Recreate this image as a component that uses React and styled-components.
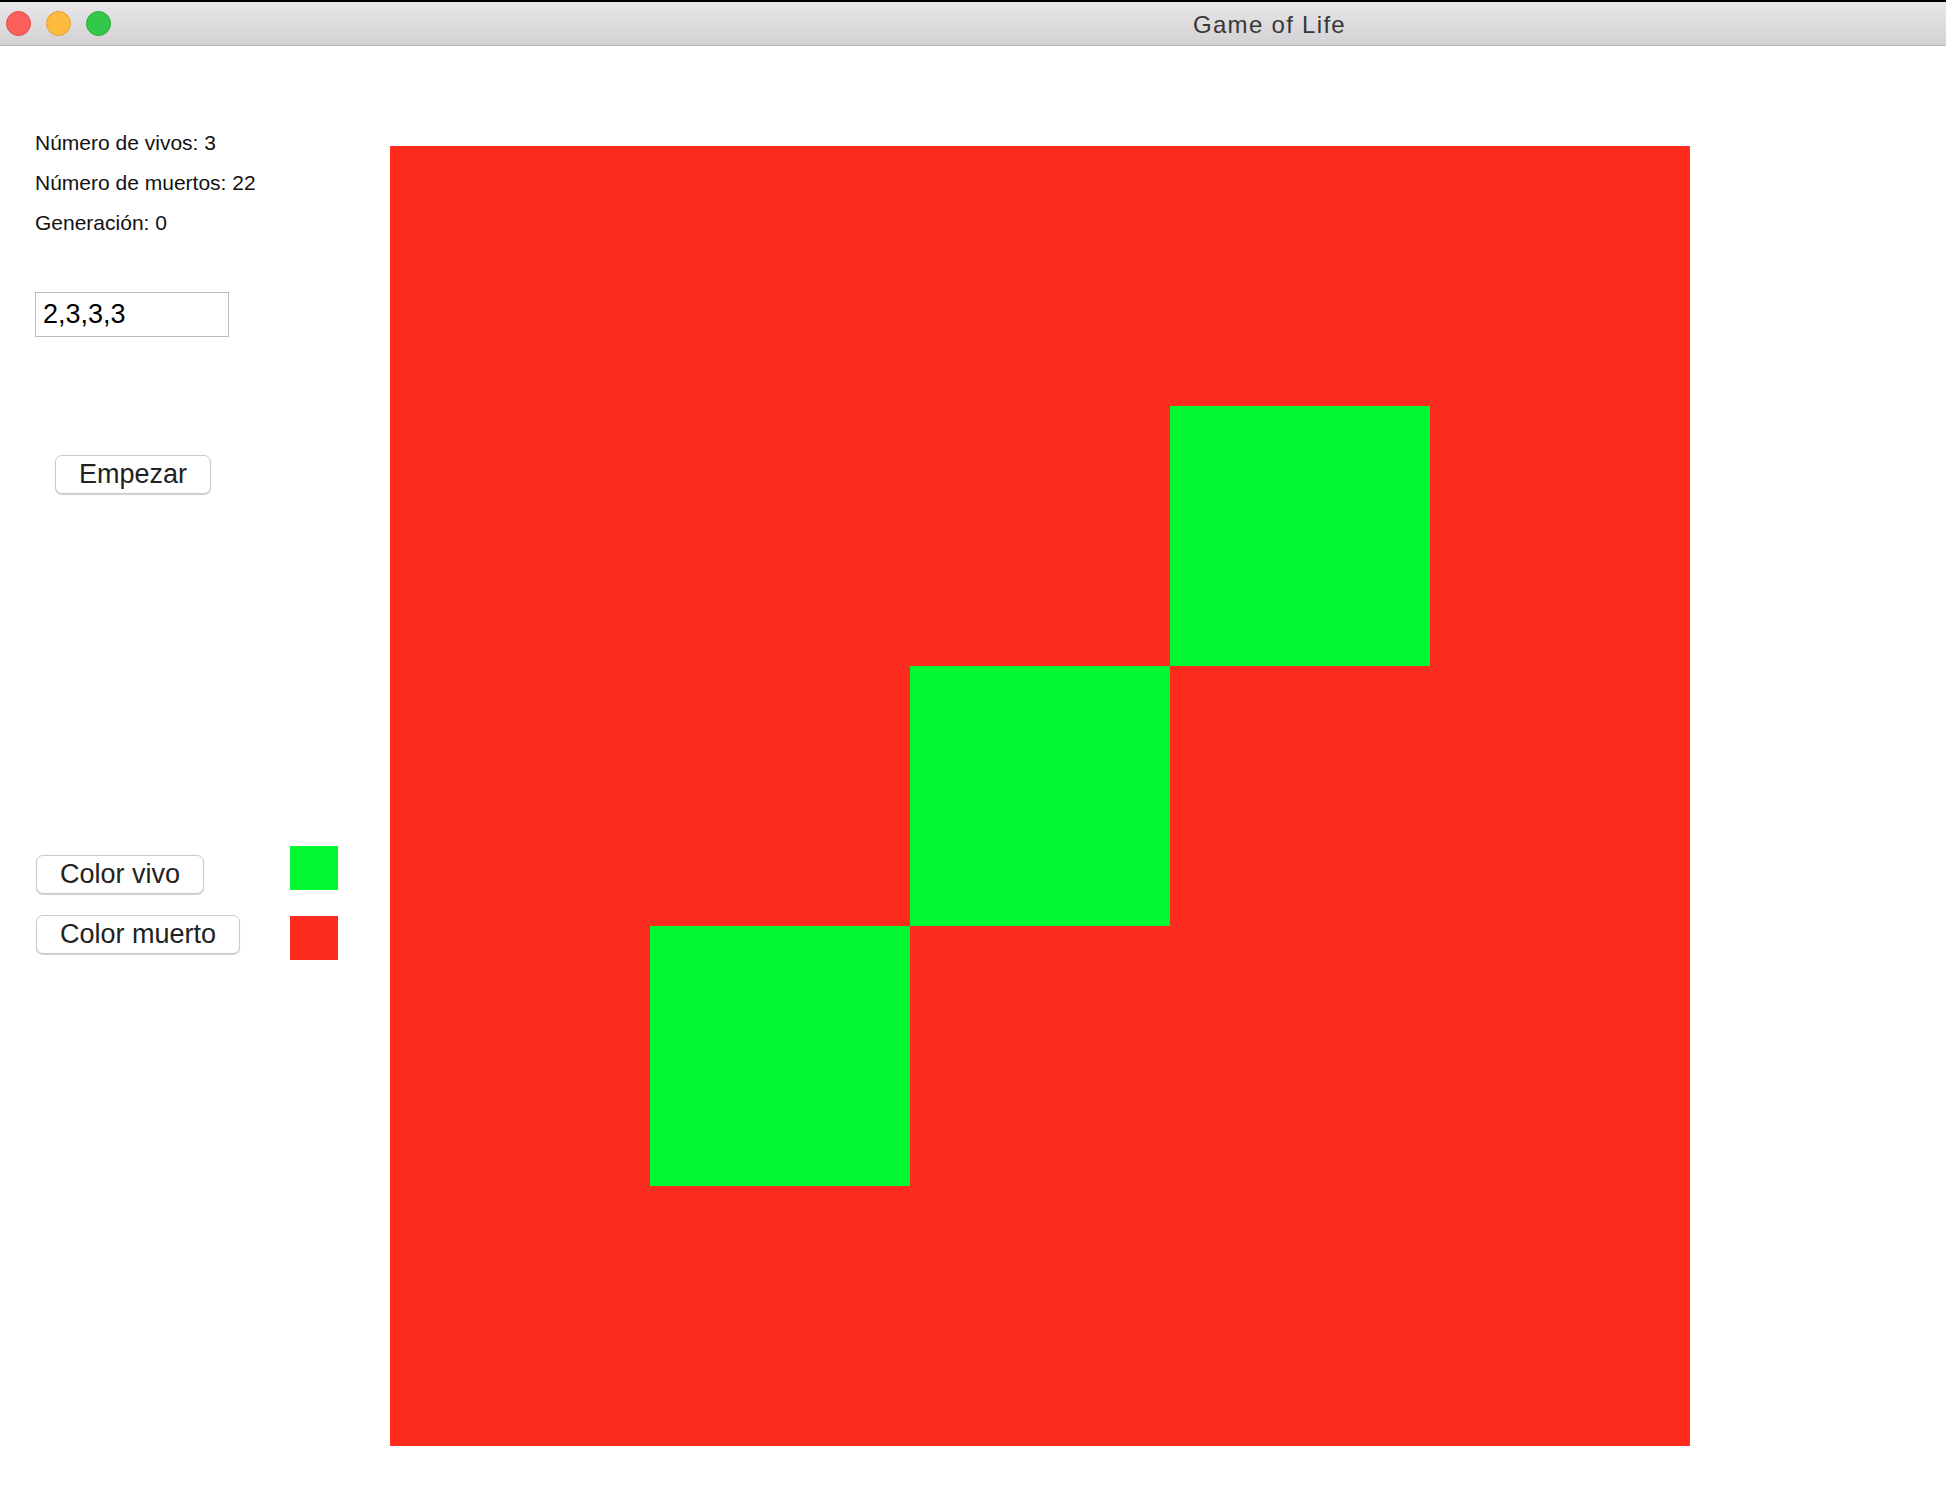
import React from "react";
import styled, { createGlobalStyle } from "styled-components";

const colors = {
  alive: "#00f731",
  dead: "#fd2a1e",
  text: "#111",
  button: "#222",
};

const GlobalStyle = createGlobalStyle`
  html, body {
    margin: 0;
    padding: 0;
    background: #fff;
    font-family: "Liberation Sans", Arial, sans-serif;
  }
`;

const Window = styled.div`
  width: 1946px;
  height: 1498px;
  background: #fff;
  overflow: hidden;
`;

const TitleBar = styled.div`
  height: 43px;
  border-top: 2px solid #000;
  border-bottom: 1px solid #b4b4b4;
  background: linear-gradient(#e8e6e8, #d3d1d3);
  display: flex;
  align-items: center;
  padding-left: 6px;
  box-sizing: content-box;
`;

const Light = styled.span`
  width: 23px;
  height: 23px;
  border-radius: 50%;
  background: ${p => p.$fill};
  border: 0.5px solid ${p => p.$edge};
  margin-right: 15px;
`;

const Title = styled.div`
  margin: 3px 0 0 1067px;
  font-size: 24px;
  letter-spacing: 1.3px;
  color: #383838;
`;

const Content = styled.div`
  display: flex;
`;

const Sidebar = styled.div`
  width: 355px;
  padding: 77px 0 0 35px;
  display: flex;
  flex-direction: column;
  align-items: flex-start;
`;

const Stat = styled.p`
  margin: 0;
  font-size: 21px;
  line-height: 40px;
  color: ${colors.text};
`;

const RuleInput = styled.input`
  margin-top: 49px;
  width: 194px;
  height: 45px;
  box-sizing: border-box;
  border: 1px solid #bcbcbc;
  padding: 0 0 0 7px;
  font-family: "Liberation Sans", Arial, sans-serif;
  font-size: 27px;
  color: #000;
  outline: none;
`;

const PushButton = styled.button`
  justify-self: start;
  height: 39px;
  padding: 0 23px;
  margin-top: ${p => p.$top || 0}px;
  margin-left: ${p => p.$left || 1}px;
  background: #fff;
  border: 1px solid #cacaca;
  border-radius: 7px;
  box-shadow: 0 1px 1px rgba(0, 0, 0, 0.18);
  font-family: "Liberation Sans", Arial, sans-serif;
  font-size: 27px;
  color: ${colors.button};
  white-space: nowrap;
`;

const ColorRow = styled.div`
  display: grid;
  grid-template-columns: 255px 48px;
  align-items: start;
  margin-top: ${p => p.$top}px;
`;

const Swatch = styled.div`
  width: 48px;
  height: 44px;
  margin-top: ${p => p.$top || 0}px;
  background: ${p => p.$color};
`;

const Board = styled.div`
  margin-top: 100px;
  width: 1300px;
  height: 1300px;
  display: grid;
  grid-template-columns: repeat(5, 260px);
  grid-template-rows: repeat(5, 260px);
  background: ${colors.dead};
`;

const Cell = styled.div`
  background: ${p => (p.$alive ? colors.alive : colors.dead)};
`;

const alive = [
  [1, 3],
  [2, 2],
  [3, 1],
];

const App = () => {
  const cells = [];
  for (let r = 0; r < 5; r++) {
    for (let c = 0; c < 5; c++) {
      const on = alive.some(([ar, ac]) => ar === r && ac === c);
      cells.push(<Cell key={`${r}-${c}`} $alive={on} />);
    }
  }

  return (
    <Window>
      <GlobalStyle />
      <TitleBar>
        <Light $fill="#fc605c" $edge="#de4a44" />
        <Light $fill="#fdbc40" $edge="#dea032" />
        <Light $fill="#34c84a" $edge="#27aa37" />
        <Title>Game of Life</Title>
      </TitleBar>
      <Content>
        <Sidebar>
          <Stat>Número de vivos: 3</Stat>
          <Stat>Número de muertos: 22</Stat>
          <Stat>Generación: 0</Stat>
          <RuleInput defaultValue="2,3,3,3" />
          <PushButton $top={118} $left={20}>Empezar</PushButton>
          <ColorRow $top={352}>
            <PushButton $top={9}>Color vivo</PushButton>
            <Swatch $color={colors.alive} />
          </ColorRow>
          <ColorRow $top={21}>
            <PushButton>Color muerto</PushButton>
            <Swatch $color={colors.dead} $top={1} />
          </ColorRow>
        </Sidebar>
        <Board>{cells}</Board>
      </Content>
    </Window>
  );
};

export default App;
